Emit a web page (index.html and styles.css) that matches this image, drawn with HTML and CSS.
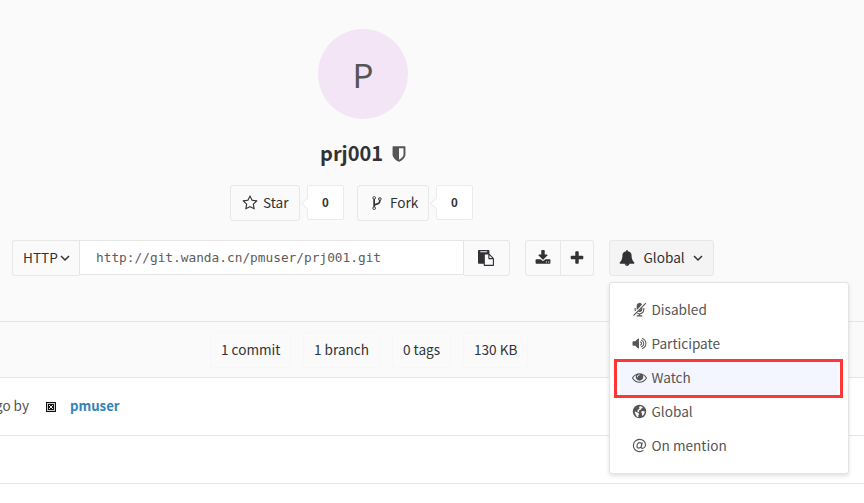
FILE: index.html
```html
<!DOCTYPE html>
<html lang="en">
<head>
<meta charset="utf-8">
<title>prj001</title>
<link rel="stylesheet" href="styles.css">
</head>
<body>
<header class="project">
  <div class="avatar"><span>P</span></div>
  <h1 class="title"><span class="t-name">prj001</span>
    <svg class="ic shield" viewBox="0 0 1792 1792"><path d="M1344 960v-640h-448v1137q119-63 213-137 235-184 235-360zm192-768v768q0 86-33.5 170.5t-83 150-118 127.5-126.5 103-121 77.5-89.5 49.5-42.5 20q-12 6-26 6t-26-6q-16-7-42.5-20t-89.5-49.5-121-77.5-126.5-103-118-127.5-83-150-33.5-170.5v-768q0-26 19-45t45-19h1152q26 0 45 19t19 45z"/></svg>
  </h1>
  <div class="counts">
    <button class="btn star"><svg class="ic" viewBox="0 0 1792 1792"><path d="M1201 1004l306-297-422-62-189-382-189 382-422 62 306 297-73 421 378-199 377 199zm527-357q0 22-26 48l-363 354 86 500q1 7 1 20 0 50-41 50-19 0-40-12l-449-236-449 236q-22 12-40 12-21 0-31.5-14.5t-10.5-35.5q0-6 2-20l86-500-364-354q-25-27-25-48 0-37 56-46l502-73 225-455q19-41 49-41t49 41l225 455 502 73q56 9 56 46z"/></svg><span>Star</span></button>
    <span class="count">0</span>
    <button class="btn fork"><svg class="ic" viewBox="0 0 1792 1792"><path d="M672 1472q0-40-28-68t-68-28-68 28-28 68 28 68 68 28 68-28 28-68zm0-1152q0-40-28-68t-68-28-68 28-28 68 28 68 68 28 68-28 28-68zm640 128q0-40-28-68t-68-28-68 28-28 68 28 68 68 28 68-28 28-68zm96 0q0 52-26 96.5t-70 69.5q-2 287-226 414-67 38-203 81-128 40-169.5 71t-41.5 100v26q44 25 70 69.5t26 96.5q0 80-56 136t-136 56-136-56-56-136q0-52 26-96.5t70-69.5v-820q-44-25-70-69.5t-26-96.5q0-80 56-136t136-56 136 56 56 136q0 52-26 96.5t-70 69.5v497q54-26 154-57 55-17 87.5-29.5t70.5-31 59-39.5 40.5-51 28-69.5 8.5-91.5q-44-25-70-69.5t-26-96.5q0-80 56-136t136-56 136 56 56 136z"/></svg><span>Fork</span></button>
    <span class="count">0</span>
  </div>
  <div class="controls">
    <button class="btn proto"><span>HTTP</span><svg class="chev" viewBox="0 0 10 10"><path d="M1 3l4 4 4-4"/></svg></button>
    <div class="url">http://git.wanda.cn/pmuser/prj001.git</div>
    <button class="btn copy"><svg class="ic" viewBox="0 0 1792 1792"><path d="M768 1664h896v-640h-416q-40 0-68-28t-28-68v-416h-384v1152zm256-1440v-64q0-13-9.5-22.5t-22.5-9.5h-704q-13 0-22.5 9.5t-9.5 22.5v64q0 13 9.5 22.5t22.5 9.5h704q13 0 22.5-9.5t9.5-22.5zm256 672h299l-299-299v299zm512 128v672q0 40-28 68t-68 28h-960q-40 0-68-28t-28-68v-160h-544q-40 0-68-28t-28-68v-1344q0-40 28-68t68-28h1088q40 0 68 28t28 68v328q21 13 36 28l408 408q28 28 48 76t20 88z"/></svg></button>
    <button class="btn download"><svg class="ic" viewBox="0 0 1792 1792"><path d="M1344 1344q0-26-19-45t-45-19-45 19-19 45 19 45 45 19 45-19 19-45zm256 0q0-26-19-45t-45-19-45 19-19 45 19 45 45 19 45-19 19-45zm128-224v320q0 40-28 68t-68 28h-1472q-40 0-68-28t-28-68v-320q0-40 28-68t68-28h465l135 136q58 56 136 56t136-56l136-136h464q40 0 68 28t28 68zm-325-569q17 41-14 70l-448 448q-18 19-45 19t-45-19l-448-448q-31-29-14-70 17-39 59-39h256v-448q0-26 19-45t45-19h256q26 0 45 19t19 45v448h256q42 0 59 39z"/></svg></button>
    <button class="btn add"><svg class="ic" viewBox="0 0 1792 1792"><path d="M1600 736v192q0 40-28 68t-68 28h-416v416q0 40-28 68t-68 28h-192q-40 0-68-28t-28-68v-416h-416q-40 0-68-28t-28-68v-192q0-40 28-68t68-28h416v-416q0-40 28-68t68-28h192q40 0 68 28t28 68v416h416q40 0 68 28t28 68z"/></svg></button>
    <div class="notify">
      <button class="btn level"><svg class="ic bell" viewBox="0 0 1792 1792"><path d="M912 1696q0-16-16-16-59 0-101.5-42.5t-42.5-101.5q0-16-16-16t-16 16q0 73 51.5 124.5t124.5 51.5q16 0 16-16zm816-288q0 52-38 90t-90 38h-448q0 106-75 181t-181 75-181-75-75-181h-448q-52 0-90-38t-38-90q50-42 91-88t85-119.5 74.5-158.5 50-206 19.5-260q0-152 117-282.5t307-158.5q-8-19-8-39 0-40 28-68t68-28 68 28 28 68q0 20-8 39 190 28 307 158.5t117 282.5q0 139 19.5 260t50 206 74.5 158.5 85 119.5 91 88z"/></svg><span>Global</span><svg class="chev" viewBox="0 0 10 10"><path d="M1 3l4 4 4-4"/></svg></button>
      <ul class="menu">
        <li><svg class="ic" viewBox="0 0 16 16"><path d="M5 3.500a3 3 0 0 1 5.700-.8L5 8.800z"/><path d="M11 5.600v2.200a3 3 0 0 1-4.500 2.500z"/><path class="line" d="M3.300 6.300v1.500q0 .8.400 1.700M12.600 6.300V8a4.600 4.600 0 0 1-6.900 4.100M8 12.500v2.500M5 14.800h6M14.800 1.300L1.600 14.500"/></svg><span>Disabled</span></li>
        <li><svg class="ic" viewBox="0 0 1792 1792"><path d="M832 352v1088q0 26-19 45t-45 19-45-19l-333-333h-262q-26 0-45-19t-19-45v-384q0-26 19-45t45-19h262l333-333q19-19 45-19t45 19 19 45z"/><path class="wave" d="M1010 710q150 60 150 186t-150 186M1130 500q280 110 280 396t-280 396M1250 290q410 170 410 606t-410 606"/></svg><span>Participate</span></li>
        <li class="active"><svg class="ic" viewBox="0 0 1792 1792"><path d="M1664 960q-152-236-381-353 61 104 61 225 0 185-131.500 316.500t-316.500 131.500-316.500-131.500-131.500-316.500q0-121 61-225-229 117-381 353 133 205 333.500 326.500t434.500 121.500 434.500-121.500 333.500-326.500zm-720-384q0-20-14-34t-34-14q-125 0-214.500 89.500t-89.500 214.500q0 20 14 34t34 14 34-14 14-34q0-86 61-147t147-61q20 0 34-14t14-34zm848 384q0 34-20 69-140 230-376.500 368.500t-499.500 138.500-499.500-139-376.500-368q-20-35-20-69t20-69q140-229 376.500-368t499.500-139 499.500 139 376.500 368q20 35 20 69z"/></svg><span>Watch</span></li>
        <li><svg class="ic" viewBox="0 0 16 16"><circle cx="8" cy="8" r="7.200"/><path class="sea" d="M8.500 2l2.300.8.800 1.400-1.500.3-.9 1.600-1.800.9.200 1.300-1.300.4-.6-1.200 1-1.600 1.200-.7-.3-1.700zM3 7.600l1.800 1.200 2 .5.700 1.500-.9 1.500.2 1.700-1.900-.7-.7-1.900-1.100-1.600zM10.700 7.400l2.700.2.200 1.500-1.400 2.600-1.300 1-.3-2.500-.8-1.600z"/></svg><span>Global</span></li>
        <li><svg class="ic" viewBox="0 0 16 16"><path class="line" d="M10.900 4.700L9.900 9.600q-.3 1.500 1 1.500c1.700 0 3.500-1.500 3.500-3.800C14.400 4 11.700 1.500 8.100 1.500A6.500 6.500 0 0 0 1.500 8a6.500 6.500 0 0 0 10.700 4.900M10.200 7c0-1.300-.7-2.100-1.900-2.100-1.700 0-3 1.600-3 3.600 0 1.400.8 2.300 1.900 2.300 1.700 0 3-1.800 3-3.800z"/></svg><span>On mention</span></li>
      </ul>
    </div>
  </div>
</header>
<nav class="stats">
  <span class="s1">1 commit</span><span class="s2">1 branch</span><span class="s3">0 tags</span><span class="s4">130 KB</span>
</nav>
<section class="commit">
  <span class="ago">go by</span>
  <svg class="identicon" viewBox="0 0 10 10" shape-rendering="crispEdges"><path d="M0 0h10v10H0z" fill="#111"/><path d="M1.500 1.500h7v7h-7z" fill="none" stroke="#ccc"/><path d="M3 3h1v1H3zM6 3h1v1H6zM4 4h2v2H4zM3 6h1v1H3zM6 6h1v1H6z" fill="#eee"/></svg>
  <a class="author">pmuser</a>
</section>
<section class="blank"></section>
</body>
</html>
```
FILE: styles.css
```css
* { box-sizing: border-box; }
body {
  margin: 0;
  width: 864px;
  height: 503px;
  overflow: hidden;
  background: #fff;
  color: #313236;
  font: 13.6px/20px "Noto Sans CJK SC", sans-serif;
}
.ic { width: 16px; height: 16px; fill: currentColor; flex: none; }
.project {
  height: 322px;
  padding-top: 29px;
  background: #fafafa;
  border-bottom: 1px solid #e5e5e5;
}
.avatar {
  width: 90px;
  height: 90px;
  margin-left: 318px;
  border-radius: 50%;
  background: #f3e5f5;
  color: #555;
  display: flex;
  align-items: center;
  justify-content: center;
  font-size: 33px;
}
.title {
  display: flex;
  align-items: center;
  gap: 7px;
  height: 30px;
  margin: 20px 0 0 320px;
  font-size: 20px;
  font-weight: 700;
}
.title span, .btn span { padding-bottom: 2px; }
.shield { width: 18px; height: 18px; color: #555; }
.counts { display: flex; margin: 16px 0 0 230px; }
.btn {
  display: flex;
  align-items: center;
  height: 36px;
  padding: 0;
  border: 1px solid #e7e7e7;
  border-radius: 3px;
  background: #fafafa;
  color: #313236;
  font: inherit;
}
.star { width: 70px; padding-left: 11px; gap: 5px; }
.fork { width: 72px; padding-left: 11px; gap: 5px; margin-left: 13px; }
.count {
  position: relative;
  width: 37px;
  height: 35px;
  margin-left: 7px;
  border: 1px solid #ebebeb;
  border-radius: 2px;
  background: #fff;
  font-size: 11.500px;
  font-weight: 700;
  line-height: 33px;
  text-align: center;
}
.count::before {
  content: "";
  position: absolute;
  left: -5px;
  top: 13px;
  width: 8px;
  height: 8px;
  border: 1px solid #ebebeb;
  border-top: 0;
  border-right: 0;
  background: #fff;
  transform: rotate(45deg);
}
.controls { display: flex; margin: 19px 0 0 12px; }
.proto { width: 67px; padding-left: 10px; gap: 2px; border-radius: 3px 0 0 3px; border-right: 0; }
.chev { width: 10px; height: 10px; fill: none; stroke: currentColor; stroke-width: 1.500; }
.url {
  width: 385px;
  height: 35px;
  padding-left: 16px;
  border: 1px solid #e5e5e5;
  background: #fff;
  color: #5c5c5c;
  font: 12.800px/33px "DejaVu Sans Mono", monospace;
}
.copy { width: 46px; padding-right: 1px; justify-content: center; border-left: 0; border-radius: 0 3px 3px 0; }
.download { width: 36px; margin-left: 15px; justify-content: center; border-radius: 3px 0 0 3px; }
.add { width: 33px; justify-content: center; border-left: 0; border-radius: 0 3px 3px 0; }
.notify { position: relative; margin-left: 15px; }
.level { width: 105px; padding-left: 9px; gap: 8.500px; background: #f4f4f4; }
.menu {
  position: absolute;
  left: 0;
  top: 42px;
  width: 240px;
  height: 192px;
  margin: 0;
  padding: 10px 8px;
  list-style: none;
  background: #fff;
  border: 1px solid #e3e3e3;
  border-radius: 3px;
  box-shadow: 0 2px 4px rgba(0, 0, 0, .12);
  color: #555;
}
.menu li { display: flex; align-items: center; gap: 5px; height: 34px; padding: 0 0 1px 13.500px; }
.menu .ic { width: 15px; height: 15px; }
.menu span { padding-bottom: 1px; }
.menu .active {
  height: 39px;
  margin: -2px -3px -3px -4px;
  padding: 0 0 2px 14.500px;
  border: 3px solid #ff3636;
  background: #f4f6ff;
  box-shadow: inset 3px 0 #fff, inset -2px 0 #fff;
}
.line { fill: none; stroke: currentColor; stroke-width: 1.200; }
.wave { fill: none; stroke: currentColor; stroke-width: 120; stroke-linecap: round; }
.sea { fill: #fff; }
.stats {
  display: flex;
  align-items: center;
  height: 56px;
  padding-left: 210px;
  gap: 12px;
  background: #fafafa;
  border-bottom: 1px solid #e5e5e5;
}
.stats span {
  height: 36px;
  border: 1px solid #f7f7f7;
  border-radius: 3px;
  padding-left: 10px;
  line-height: 32px;
  white-space: nowrap;
}
.s1 { width: 81px; }
.s2 { width: 77px; }
.s3 { width: 59px; }
.s4 { width: 65px; }
.commit {
  display: flex;
  align-items: center;
  height: 58px;
  border-bottom: 1px solid #e5e5e5;
  color: #555;
}
.ago { margin-left: -5px; width: 51px; padding-bottom: 3px; font-size: 13.500px; }
.identicon { width: 10px; height: 10px; }
.author { margin-left: 14px; padding-bottom: 2px; color: #3084bb; font-size: 13.200px; font-weight: 700; }
.blank { height: 48px; border-bottom: 1px solid #e5e5e5; }
```
